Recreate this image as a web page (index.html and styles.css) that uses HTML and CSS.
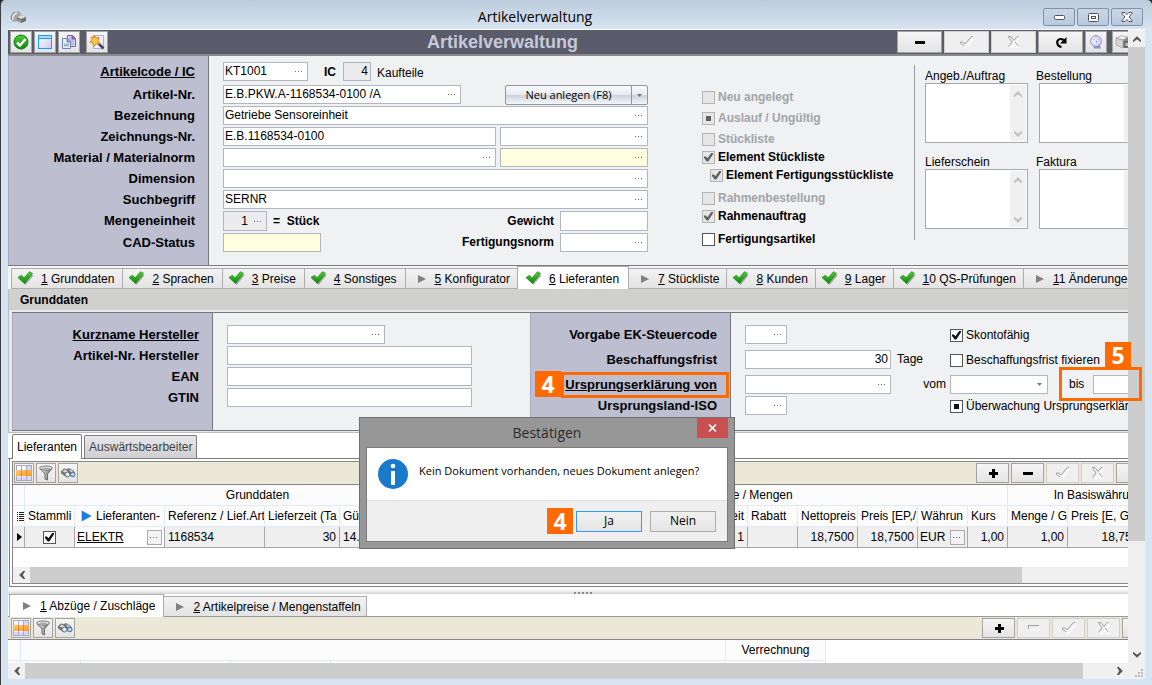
FILE: index.html
```html
<!DOCTYPE html>
<html lang="de">
<head>
<meta charset="utf-8">
<title>Artikelverwaltung</title>
<link rel="stylesheet" href="styles.css">
</head>
<body>
<svg class="sprite" aria-hidden="true">
  <defs>
    <linearGradient id="g-green" x1="0" y1="0" x2="0" y2="1"><stop offset="0" stop-color="#4fd032"/><stop offset="1" stop-color="#0f860e"/></linearGradient>
    <linearGradient id="g-lens" x1="0" y1="0" x2="1" y2="1"><stop offset="0" stop-color="#ffffff"/><stop offset="1" stop-color="#c9c9f2"/></linearGradient>
    <linearGradient id="g-orange" x1="0" y1="0" x2="1" y2="1"><stop offset="0" stop-color="#ffc873"/><stop offset="1" stop-color="#f9982a"/></linearGradient>
    <linearGradient id="g-steel" x1="0" y1="0" x2="1" y2="0"><stop offset="0" stop-color="#f4f4f4"/><stop offset="1" stop-color="#6d6d6d"/></linearGradient>
  </defs>
  <symbol id="dots" viewBox="0 0 9 3"><path d="M0 1h1v1H0zM3 1h1v1H3zM6 1h1v1H6z" fill="#6c6c6c"/></symbol>
  <symbol id="tick" viewBox="0 0 16 14"><path d="M2 8 5 6l2.500 3L13 3l3 1.500L8 14z" fill="#8a8a8a" opacity=".7"/><path d="M.500 6.500 4 4.300 6.500 7 12 .700 15 2.500 7 12.500z" fill="url(#g-green)" stroke="#128512" stroke-width=".7"/></symbol>
  <symbol id="play" viewBox="0 0 8 8"><path d="M0 0 8 4 0 8z" fill="#808080"/></symbol>
  <symbol id="ok" viewBox="0 0 16 16"><circle cx="8" cy="8" r="7" fill="url(#g-green)" stroke="#0d7a0d"/><path d="M4 8.500 7 11.500 12.500 5" fill="none" stroke="#fff" stroke-width="2.500"/></symbol>
  <symbol id="win" viewBox="0 0 16 16"><rect x="1.500" y="1.500" width="13" height="13" fill="url(#g-lens)" stroke="#1c9bff"/><path d="M2 2h12v2H2z" fill="#a8dcff"/><path d="M1 4.500h14" stroke="#1c9bff"/></symbol>
  <symbol id="copy" viewBox="0 0 16 16"><path d="M6.500 1.500h5l3 3v8h-8z" fill="#ded8f4" stroke="#7460a4"/><path d="M11 1.500v3.500h3.500" fill="#8a62b8" stroke="#7c4fae"/><path d="M8 4h2M8 6h5M8 8h5M8 10h5" stroke="#a79bd0"/><path d="M1.500 4.500h5l3 3v7h-8z" fill="#e8eefa" stroke="#6d84b0"/><path d="M6 4.500v3.500h3.500" fill="#8fa3cb" stroke="#6d84b0"/><path d="M3 9.500h5v3H3z" fill="#a3b3d4"/></symbol>
  <symbol id="wand" viewBox="0 0 16 16"><path d="M4.500 1.500h10v13h-10z" fill="#f0efff" stroke="#9fb0e6"/><path d="M9 9l5.500 5.500" stroke="#3e4660" stroke-width="2.500"/><path d="M5.500 1.500 7 4l3-.500L9 6.500l2 3.500-3.500-.500L5 12.500 4 9 .800 8l2.400-2L2 3l3 .500z" fill="#ffc94c" stroke="#e5811f"/></symbol>
  <symbol id="gridicon" viewBox="0 0 18 16"><path d="M1 0h16v16H1z" fill="#fafaff"/><path d="M12 0h5v16h-5zM1 12h16v4H1z" fill="#d6d6f6"/><path d="M1 5h16v6H1z" fill="url(#g-orange)"/><path d="M1.500 0v5M1.500 11v5M6.500 0v5M6.500 11v5M11.500 0v5M11.500 11v5M16.500 0v5M16.500 11v5M1 .500h16M1 15.500h16" stroke="#a9a9c4"/><path d="M6.500 5v6M11.500 5v6" stroke="#e08c2c"/></symbol>
  <symbol id="funnel" viewBox="0 0 16 16"><path d="M2.500 4 7 9v5l2.500 1V9l4-5z" fill="url(#g-steel)" stroke="#6c6c6c"/><ellipse cx="8" cy="3" rx="6.500" ry="2" fill="#e9e9e9" stroke="#767676"/><ellipse cx="8" cy="3.500" rx="4" ry="1" fill="#aaa"/></symbol>
  <symbol id="binoc" viewBox="0 0 16 16"><path d="M1 6 4 3.500l3 .500 2-1 5 3 1 3-2 2.500-3-1-3 1.500-3-1.500-3-2z" fill="#777"/><path d="M2.500 6 5 4.500l3 2-2 2zM9 4.500l2 .500 2.500 2-2 1z" fill="#d8d8d8"/><circle cx="7.500" cy="9.500" r="2.500" fill="#dceeff" stroke="#55697c"/><circle cx="12.800" cy="9.500" r="2.300" fill="#a9d6fb" stroke="#55697c"/></symbol>
  <symbol id="minus" viewBox="0 0 12 12"><path d="M1 5h10v3H1z" fill="#000"/></symbol>
  <symbol id="plus" viewBox="0 0 12 12"><path d="M2 5h9v3H2zM5 2h3v9H5z" fill="#000"/></symbol>
  <symbol id="minus-off" viewBox="0 0 12 6"><path d="M0 0h11v1H1v3H0z" fill="#a0a0a0"/><path d="M12 1v4H1V4h10V1z" fill="#fff"/></symbol>
  <symbol id="check-off" viewBox="0 0 14 12"><path d="M13.500 2 6 11.500 2 8.500" fill="none" stroke="#fff" stroke-width="1.500"/><path d="M4.500 10 .500 7.500V6h2.500l2 2L11.500.500H13" fill="none" stroke="#a0a0a0"/></symbol>
  <symbol id="cross-off" viewBox="0 0 12 12"><path d="M11.500 1.500 8 6l3.500 5.500H9L6.500 8 4 11.500H2" fill="none" stroke="#fff" stroke-width="1.500"/><path d="M4 6 .500 1V.500H3L6 4.500 9 .500h1.500M4 6 .500 10.500M7 6l3.500 4.500" fill="none" stroke="#a0a0a0"/></symbol>
  <symbol id="redo" viewBox="0 0 12 12"><path d="M6.500 11C1 10 1 3 5.500 3 8 3 9 4 9.500 5.500" fill="none" stroke="#000" stroke-width="2.200"/><path d="M11.500 1v6.500H5z" fill="#000"/></symbol>
  <symbol id="clock" viewBox="0 0 14 15"><path d="M4 11.500 5 14.500h7L11 10z" fill="#8f8fc8"/><circle cx="7" cy="6.500" r="5.800" fill="url(#g-lens)" stroke="#8383c4"/><path d="M7 7h1M4 4l1 1M10 4l-1 1M7 2v1" stroke="#5a5aa8"/></symbol>
  <symbol id="cube" viewBox="0 0 16 14"><path d="M1 3 6 .800l7 1.200L8 5z" fill="#f2f2f2" stroke="#999" stroke-width=".7"/><path d="M1 3l7 2v8l-7-3z" fill="#d4d4d4" stroke="#999" stroke-width=".7"/><path d="M8 5l5-3v8l-5 3z" fill="#8a8a8a"/><path d="M9 6h7v7H9z" fill="#6a6a6a"/><path d="M10.500 8H16v3h-5.500z" fill="#c4c4c4"/></symbol>
  <symbol id="parts" viewBox="0 0 17 14"><path d="M1 7c0-2 2-5 5-5 2-2 5 0 5 3l-2 5-5 2-2-1z" fill="#a4a6a8"/><path d="M3 10C2 6 4 4 7 3" fill="none" stroke="#eee" stroke-width="1.500"/><path d="M2 10c-2-3 0-6 3-8" fill="none" stroke="#808284"/><path d="M7 7 12 5l4 2v4l-5 2-4-2z" fill="#6d6f70"/><path d="M7 7l4 2 5-2-4-2z" fill="#dcdcda"/><path d="M8 9l3 1.500V13L8 11.500z" fill="#a5a5a3"/></symbol>
  <symbol id="up" viewBox="0 0 8 6"><path d="M0 4.500 4 .500l4 4v1.500L4 3 0 6z" fill="currentColor" stroke="currentColor" stroke-width=".5"/></symbol>
  <symbol id="down" viewBox="0 0 8 6"><path d="M0 0l4 3 4-3v1.500l-4 4-4-4z" fill="currentColor" stroke="currentColor" stroke-width=".5"/></symbol>
  <symbol id="left" viewBox="0 0 6 8"><path d="M4.500 0 .500 4l4 4H6L3.500 4 6 0z" fill="currentColor" stroke="currentColor" stroke-width=".5"/></symbol>
  <symbol id="right" viewBox="0 0 6 8"><path d="M0 0h1.500l4 4-4 4H0l2.500-4z" fill="currentColor" stroke="currentColor" stroke-width=".5"/></symbol>
  <symbol id="caret" viewBox="0 0 5 3"><path d="M0 0h5L2.500 3z" fill="#777"/></symbol>
</svg>

<div class="window">
  <header class="titlebar">
    <svg class="app-icon"><use href="#parts"/></svg>
    <h1 class="window-title">Artikelverwaltung</h1>
    <div class="window-buttons">
      <button class="win-btn" aria-label="Minimieren"><svg width="11" height="5" viewBox="0 0 11 5"><rect x=".5" y=".5" width="10" height="4" rx="1" fill="#fff" stroke="#4a5266"/></svg></button>
      <button class="win-btn" aria-label="Maximieren"><svg width="11" height="9" viewBox="0 0 11 9"><rect x=".5" y=".5" width="10" height="8" rx="1" fill="#fff" stroke="#4a5266"/><rect x="3.500" y="3.500" width="4" height="2" fill="#fff" stroke="#4a5266"/></svg></button>
      <button class="win-btn" aria-label="Schließen"><svg width="12" height="10" viewBox="0 0 12 10"><path d="M1 .500h3L6 2.500 8 .500h3v1L8 5l3 3.500v1H8l-2-2-2 2H1v-1L4 5 1 1.500z" fill="#fff" stroke="#4a5266"/></svg></button>
    </div>
  </header>

  <div class="workarea">
    <main class="viewport">
      <div class="toolbar">
        <div class="tools-left">
          <button class="tool" aria-label="OK"><svg class="i16"><use href="#ok"/></svg></button>
          <button class="tool" aria-label="Fenster"><svg class="i16"><use href="#win"/></svg></button>
          <button class="tool" aria-label="Kopieren"><svg class="i16"><use href="#copy"/></svg></button>
          <button class="tool apart" aria-label="Assistent"><svg class="i16"><use href="#wand"/></svg></button>
        </div>
        <h2 class="form-title">Artikelverwaltung</h2>
        <div class="tools-right">
          <button class="tool wide" aria-label="Löschen"><svg class="i12"><use href="#minus"/></svg></button>
          <button class="tool wide" disabled aria-label="Übernehmen"><svg class="i14"><use href="#check-off"/></svg></button>
          <button class="tool wide" disabled aria-label="Verwerfen"><svg class="i12"><use href="#cross-off"/></svg></button>
          <button class="tool wide" aria-label="Aktualisieren"><svg class="i12"><use href="#redo"/></svg></button>
          <button class="tool" aria-label="Verlauf"><svg class="i14"><use href="#clock"/></svg></button>
          <button class="tool last" aria-label="Teile"><svg class="i16"><use href="#cube"/></svg></button>
        </div>
      </div>

      <section class="head-form">
        <div class="captions">
          <label class="lead link" for="code">Artikelcode / IC</label>
          <label for="nr">Artikel-Nr.</label>
          <label for="bez">Bezeichnung</label>
          <label for="zng">Zeichnungs-Nr.</label>
          <label for="mat">Material / Materialnorm</label>
          <label for="dim">Dimension</label>
          <label for="such">Suchbegriff</label>
          <label class="tall" for="me">Mengeneinheit</label>
          <label for="cad">CAD-Status</label>
        </div>
        <div class="pane">
          <div class="rows">
            <div class="row lead">
              <span class="field w85"><input id="code" value="KT1001"><button aria-label="Auswahl"><svg><use href="#dots"/></svg></button></span>
              <label class="strong ic" for="ic">IC</label>
              <span class="field off w28"><input id="ic" class="num" value="4"></span>
              <span class="note">Kaufteile</span>
            </div>
            <div class="row spread">
              <span class="field w238"><input id="nr" value="E.B.PKW.A-1168534-0100 /A"><button aria-label="Auswahl"><svg><use href="#dots"/></svg></button></span>
              <span class="split"><button class="split-main">Neu anlegen (F8)</button><button class="split-more" aria-label="Mehr"><svg class="caret"><use href="#caret"/></svg></button></span>
            </div>
            <div class="row"><span class="field grow"><input id="bez" value="Getriebe Sensoreinheit"><button aria-label="Auswahl"><svg><use href="#dots"/></svg></button></span></div>
            <div class="row">
              <span class="field grow"><input id="zng" value="E.B.1168534-0100"></span>
              <span class="field w148"><input aria-label="Zeichnungsindex"><button aria-label="Auswahl"><svg><use href="#dots"/></svg></button></span>
            </div>
            <div class="row">
              <span class="field grow"><input id="mat"><button aria-label="Auswahl"><svg><use href="#dots"/></svg></button></span>
              <span class="field yellow w148"><input aria-label="Materialnorm"><button aria-label="Auswahl"><svg><use href="#dots"/></svg></button></span>
            </div>
            <div class="row"><span class="field grow"><input id="dim"><button aria-label="Auswahl"><svg><use href="#dots"/></svg></button></span></div>
            <div class="row"><span class="field grow"><input id="such" value="SERNR"><button aria-label="Auswahl"><svg><use href="#dots"/></svg></button></span></div>
            <div class="row tall">
              <span class="field off w44"><input id="me" class="num" value="1"><button aria-label="Auswahl"><svg><use href="#dots"/></svg></button></span>
              <span class="strong unit-name">=&nbsp; Stück</span>
              <label class="strong push" for="gew">Gewicht</label>
              <span class="field w88"><input id="gew"></span>
            </div>
            <div class="row">
              <span class="field yellow w98"><input id="cad"></span>
              <label class="strong push" for="fn">Fertigungsnorm</label>
              <span class="field w88"><input id="fn"><button aria-label="Auswahl"><svg><use href="#dots"/></svg></button></span>
            </div>
          </div>
          <div class="flags">
            <label class="check muted gap-s"><input type="checkbox" disabled>Neu angelegt</label>
            <label class="check muted gap-s"><input type="checkbox" class="mixed" disabled>Auslauf / Ungültig</label>
            <label class="check muted"><input type="checkbox" disabled>Stückliste</label>
            <label class="check"><input type="checkbox" checked disabled>Element Stückliste</label>
            <label class="check indent gap-m"><input type="checkbox" checked disabled>Element Fertigungsstückliste</label>
            <label class="check muted"><input type="checkbox" disabled>Rahmenbestellung</label>
            <label class="check gap-m"><input type="checkbox" checked disabled>Rahmenauftrag</label>
            <label class="check"><input type="checkbox">Fertigungsartikel</label>
          </div>
          <div class="memos">
            <div class="memo"><label for="m1">Angeb./Auftrag</label><div class="memo-box"><textarea id="m1"></textarea><span class="memo-bar"><svg class="arr-v"><use href="#up"/></svg><svg class="arr-v"><use href="#down"/></svg></span></div></div>
            <div class="memo second"><label for="m2">Bestellung</label><div class="memo-box"><textarea id="m2"></textarea><span class="memo-bar"><svg class="arr-v"><use href="#up"/></svg><svg class="arr-v"><use href="#down"/></svg></span></div></div>
            <div class="memo"><label for="m3">Lieferschein</label><div class="memo-box"><textarea id="m3"></textarea><span class="memo-bar"><svg class="arr-v"><use href="#up"/></svg><svg class="arr-v"><use href="#down"/></svg></span></div></div>
            <div class="memo second"><label for="m4">Faktura</label><div class="memo-box"><textarea id="m4"></textarea><span class="memo-bar"><svg class="arr-v"><use href="#up"/></svg><svg class="arr-v"><use href="#down"/></svg></span></div></div>
          </div>
        </div>
      </section>

      <nav class="tabs">
        <button class="tab"><svg class="tick"><use href="#tick"/></svg><span><u>1</u> Grunddaten</span></button>
        <button class="tab"><svg class="tick"><use href="#tick"/></svg><span><u>2</u> Sprachen</span></button>
        <button class="tab"><svg class="tick"><use href="#tick"/></svg><span><u>3</u> Preise</span></button>
        <button class="tab"><svg class="tick"><use href="#tick"/></svg><span><u>4</u> Sonstiges</span></button>
        <button class="tab"><svg class="play"><use href="#play"/></svg><span><u>5</u> Konfigurator</span></button>
        <button class="tab active"><svg class="tick"><use href="#tick"/></svg><span><u>6</u> Lieferanten</span></button>
        <button class="tab"><svg class="play"><use href="#play"/></svg><span><u>7</u> Stückliste</span></button>
        <button class="tab"><svg class="tick"><use href="#tick"/></svg><span><u>8</u> Kunden</span></button>
        <button class="tab"><svg class="tick"><use href="#tick"/></svg><span><u>9</u> Lager</span></button>
        <button class="tab"><svg class="tick"><use href="#tick"/></svg><span><u>1</u>0 QS-Prüfungen</span></button>
        <button class="tab"><svg class="play"><use href="#play"/></svg><span><u>1</u>1 Änderungen</span></button>
      </nav>

      <section class="supplier">
        <h3 class="group-title">Grunddaten</h3>
        <div class="supplier-form">
          <div class="captions">
            <label class="link" for="kh">Kurzname Hersteller</label>
            <label for="ah">Artikel-Nr. Hersteller</label>
            <label for="ean">EAN</label>
            <label for="gtin">GTIN</label>
          </div>
          <div class="pane maker">
            <div class="rows">
              <div class="row"><span class="field w158"><input id="kh"><button aria-label="Auswahl"><svg><use href="#dots"/></svg></button></span></div>
              <div class="row"><span class="field grow"><input id="ah"></span></div>
              <div class="row"><span class="field grow"><input id="ean"></span></div>
              <div class="row"><span class="field grow"><input id="gtin"></span></div>
            </div>
          </div>
          <div class="captions">
            <label class="gap-m" for="ek">Vorgabe EK-Steuercode</label>
            <label class="gap-m" for="bf">Beschaffungsfrist</label>
            <label class="link" for="ue">Ursprungserklärung von</label>
            <label for="iso">Ursprungsland-ISO</label>
          </div>
          <div class="pane">
            <div class="rows origin">
              <div class="row gap-m"><span class="cell"><span class="field w42"><input id="ek"><button aria-label="Auswahl"><svg><use href="#dots"/></svg></button></span></span><span class="unit"></span><label class="check plain"><input type="checkbox" checked>Skontofähig</label></div>
              <div class="row gap-m"><span class="cell"><span class="field grow"><input id="bf" class="num" value="30"></span></span><span class="unit">Tage</span><label class="check plain"><input type="checkbox">Beschaffungsfrist fixieren</label></div>
              <div class="row"><span class="cell"><span class="field grow"><input id="ue"><button aria-label="Auswahl"><svg><use href="#dots"/></svg></button></span></span><label class="unit end" for="vom">vom</label><span class="field w98"><input id="vom"><button aria-label="Kalender"><svg class="caret"><use href="#caret"/></svg></button></span><label class="bis" for="bis">bis</label><span class="field w98"><input id="bis"></span></div>
              <div class="row"><span class="cell"><span class="field w42"><input id="iso"><button aria-label="Auswahl"><svg><use href="#dots"/></svg></button></span></span><span class="unit"></span><label class="check plain"><input type="checkbox" class="mixed">Überwachung Ursprungserklärung</label></div>
            </div>
          </div>
        </div>
      </section>

      <nav class="subtabs">
        <button class="subtab active">Lieferanten</button>
        <button class="subtab">Auswärtsbearbeiter</button>
      </nav>

      <section class="grid-panel">
        <div class="grid-frame">
          <div class="gridbar">
            <button class="tool small" aria-label="Tabelle"><svg class="i18"><use href="#gridicon"/></svg></button>
            <button class="tool small" aria-label="Filter"><svg class="i16"><use href="#funnel"/></svg></button>
            <button class="tool small" aria-label="Suchen"><svg class="i16"><use href="#binoc"/></svg></button>
            <div class="gridbar-right upper">
              <button class="tool mid" aria-label="Neu"><svg class="i12"><use href="#plus"/></svg></button>
              <button class="tool mid" aria-label="Löschen"><svg class="i12"><use href="#minus"/></svg></button>
              <button class="tool mid" disabled aria-label="Übernehmen"><svg class="i14"><use href="#check-off"/></svg></button>
              <button class="tool mid" disabled aria-label="Verwerfen"><svg class="i12"><use href="#cross-off"/></svg></button>
              <button class="tool mid" aria-label="Aktualisieren"></button>
            </div>
          </div>
          <div class="table-clip">
            <table class="grid">
              <colgroup><col class="c12"><col class="c50"><col class="c90"><col class="c100"><col class="c75"><col class="c151"><col class="c207"><col class="c50"><col class="c50"><col class="c60"><col class="c60"><col class="c50"><col class="c40"><col class="c60"><col class="c81"><col class="c40"></colgroup>
              <thead>
                <tr><th></th><th class="mid-text" colspan="5">Grunddaten</th><th class="mid-text" colspan="7">Preise / Mengen</th><th class="mid-text" colspan="3">In Basiswährung</th></tr>
                <tr><th class="mark"><svg width="7" height="9" viewBox="0 0 7 9"><path d="M0 .500h1M2 .500h5M0 2.500h1M2 2.500h5M0 4.500h1M2 4.500h5M0 6.500h1M2 6.500h5M0 8.500h1M2 8.500h5" stroke="#222"/></svg></th><th>Stammli</th><th><svg class="sort" viewBox="0 0 10 10"><path d="M1 0 10 5 1 10z" fill="#1d7fe0" stroke="#1763b8" stroke-width=".5"/></svg>Lieferanten-</th><th>Referenz / Lief.Art</th><th>Lieferzeit (Ta</th><th>Gültig</th><th></th><th class="num">Einheit</th><th>Rabatt</th><th>Nettopreis</th><th>Preis [EP,/</th><th>Währun</th><th>Kurs</th><th>Menge / G</th><th>Preis [E, G</th><th></th></tr>
              </thead>
              <tbody>
                <tr><td class="mark"><svg width="5" height="8" viewBox="0 0 5 8"><path d="M0 0 5 4 0 8z" fill="#000"/></svg></td><td class="mid-text"><input type="checkbox" checked aria-label="Stammlieferant"></td><td class="open"><span class="cell-pick"><a href="#">ELEKTR</a><button aria-label="Auswahl"><svg><use href="#dots"/></svg></button></span></td><td>1168534</td><td class="num">30</td><td>14.</td><td></td><td class="num">1</td><td></td><td class="num">18,7500</td><td class="num">18,7500</td><td class="tight"><span class="cell-pick">EUR<button aria-label="Auswahl"><svg><use href="#dots"/></svg></button></span></td><td class="num">1,00</td><td class="num">1,00</td><td class="num">18,7500</td><td></td></tr>
              </tbody>
            </table>
          </div>
          <div class="hbar inner"><button aria-label="Nach links"><svg class="arr-h"><use href="#left"/></svg></button><span class="thumb"></span></div>
        </div>
      </section>

      <div class="splitter"><span></span><span></span><span></span><span></span><span></span></div>

      <nav class="lowtabs">
        <button class="tab active"><svg class="play"><use href="#play"/></svg><span><u>1</u> Abzüge / Zuschläge</span></button>
        <button class="tab"><svg class="play"><use href="#play"/></svg><span><u>2</u> Artikelpreise / Mengenstaffeln</span></button>
      </nav>
      <div class="gridbar low">
        <button class="tool small" aria-label="Tabelle"><svg class="i18"><use href="#gridicon"/></svg></button>
        <button class="tool small" aria-label="Filter"><svg class="i16"><use href="#funnel"/></svg></button>
        <button class="tool small" aria-label="Suchen"><svg class="i16"><use href="#binoc"/></svg></button>
        <div class="gridbar-right">
          <button class="tool mid" aria-label="Neu"><svg class="i12"><use href="#plus"/></svg></button>
          <button class="tool mid" disabled aria-label="Löschen"><svg width="12" height="6"><use href="#minus-off"/></svg></button>
          <button class="tool mid" disabled aria-label="Übernehmen"><svg class="i14"><use href="#check-off"/></svg></button>
          <button class="tool mid" disabled aria-label="Verwerfen"><svg class="i12"><use href="#cross-off"/></svg></button>
          <button class="tool mid" aria-label="Aktualisieren"></button>
        </div>
      </div>
      <div class="low-table">
        <table class="grid low-grid">
          <colgroup><col class="c12"><col class="c60"><col class="c150"><col class="c100"><col class="c395"><col class="c100"></colgroup>
          <thead>
            <tr><th></th><th colspan="4"></th><th class="mid-text">Verrechnung</th></tr>
            <tr><th></th><th></th><th></th><th></th><th></th><th></th></tr>
          </thead>
        </table>
      </div>
    </main>
    <div class="vbar"><button aria-label="Nach oben"><svg class="arr-v"><use href="#up"/></svg></button><span class="thumb"></span><button aria-label="Nach unten"><svg class="arr-v"><use href="#down"/></svg></button></div>
    <div class="hbar outer"><button aria-label="Nach links"><svg class="arr-h"><use href="#left"/></svg></button><span class="thumb"></span><button aria-label="Nach rechts"><svg class="arr-h"><use href="#right"/></svg></button></div>
    <div class="grip"><svg width="8" height="8" viewBox="0 0 8 8"><path d="M6 0h2v2H6zM3 3h2v2H3zM6 3h2v2H6zM0 6h2v2H0zM3 6h2v2H3zM6 6h2v2H6z" fill="#b9b9b9"/></svg></div>
  </div>

  <div class="frame frame-origin"></div>
  <span class="badge badge-origin">4</span>
  <div class="frame frame-until"></div>
  <span class="badge badge-until">5</span>

  <div class="dialog" role="dialog" aria-labelledby="dlg-title">
    <div class="dialog-head"><h2 id="dlg-title">Bestätigen</h2><button class="dialog-close" aria-label="Schließen"><svg width="9" height="8" viewBox="0 0 9 8"><path d="M1 .500 8 7.500M8 .500 1 7.500" stroke="#fff" stroke-width="1.600"/></svg></button></div>
    <div class="dialog-inner">
      <div class="dialog-body">
        <svg class="info" viewBox="0 0 30 30"><circle cx="15" cy="15" r="15" fill="#1979ca"/><circle cx="15" cy="7" r="2.300" fill="#fff"/><path d="M13 12h4v14h-4z" fill="#fff"/></svg>
        <p>Kein Dokument vorhanden, neues Dokument anlegen?</p>
      </div>
      <div class="dialog-foot"><span class="badge">4</span><button class="dlg-btn primary">Ja</button><button class="dlg-btn">Nein</button></div>
    </div>
  </div>
</div>
</body>
</html>
```
FILE: styles.css
```css
* { box-sizing: border-box; }
body { margin: 0; background: #2b2b2b; color: #000; font: 12px/14px "Liberation Sans", Arial, sans-serif; }
h1, h2, h3, p { margin: 0; font-weight: normal; }
button, input, textarea { margin: 0; padding: 0; font: inherit; color: inherit; border-radius: 0; }
button { display: flex; align-items: center; justify-content: center; flex-shrink: 0; border: 0; background: none; }
input { min-width: 0; outline: 0; }
svg { display: block; flex-shrink: 0; }
.sprite { position: absolute; width: 0; height: 0; }
.i12 { width: 12px; height: 12px; }
.i14 { width: 14px; height: 14px; }
.i16 { width: 16px; height: 16px; }
.i18 { width: 18px; height: 16px; }
.arr-v { width: 8px; height: 6px; }
.arr-h { width: 6px; height: 8px; }
.caret { width: 5px; height: 3px; }

/* window */
.window { position: relative; display: flex; flex-direction: column; height: 100vh; padding: 0 7px 6px; border-left: 1px solid #3c3c42; border-radius: 5px 5px 0 0; background: linear-gradient(#bccbdb, #d7e4f2 29px); overflow: hidden; }
.titlebar { display: flex; align-items: center; height: 29px; padding: 5px 2px 0 2px; }
.app-icon { width: 17px; height: 14px; }
.window-title { flex: 1; text-align: center; font: 14px/20px "Open Sans", "Noto Sans", sans-serif; }
.window-buttons { display: flex; gap: 2px; }
.win-btn { width: 32px; height: 18px; border: 1px solid #8291aa; border-radius: 2px; background: linear-gradient(#c9d6e5, #b9c9dc); }
.workarea { flex: 1; min-height: 0; display: grid; grid-template: minmax(0, 1fr) 16px / minmax(0, 1fr) 17px; border-top: 1px solid #fff; background: #f0f0f0; }
.viewport { display: flex; flex-direction: column; overflow: hidden; background: #fff; }
.viewport > * { flex-shrink: 0; }

/* toolbar */
.toolbar { display: flex; align-items: center; height: 26px; padding-left: 2px; border-bottom: 2px solid #8a8a8a; background: #5a5b6b; }
.tools-left { display: flex; gap: 2px; }
.form-title { flex: 1; text-align: center; color: #c6c9d8; font: bold 18px/22px "Liberation Sans", Arial, sans-serif; }
.tools-right { display: flex; gap: 2px; width: 231px; overflow: hidden; }
.tool { width: 22px; height: 22px; border: 1px solid #a3a3a3; background: linear-gradient(#f5f5f5, #e4e4e4); }
.tool.wide { width: 45px; }
.tool:disabled { border-color: #cfcfcf; background: #efefef; }
.tool.apart { margin-left: 4px; }
.tool.last { margin-left: 3px; }
.tool.small { width: 20px; height: 20px; }
.tool.mid { width: 33px; height: 20px; }

/* forms */
.head-form { display: flex; height: 210px; border-bottom: 1px solid #7c7c80; }
.captions { display: flex; flex-direction: column; gap: 2px; width: 200px; flex-shrink: 0; padding: 6px 13px 0 0; border: 1px solid #a9aabf; border-width: 0 0 0 1px; background: #bdbed0; font: bold 13px/19px "Liberation Sans", Arial, sans-serif; text-align: right; }
.captions .tall { line-height: 20px; }
.link { text-decoration: underline; }
.lead { margin-bottom: 2px; }
.pane { display: flex; flex: 1; min-width: 0; border-left: 1px solid #77777c; background: #eff1f3; }
.rows { display: flex; flex-direction: column; gap: 2px; width: 439px; flex-shrink: 0; padding: 6px 0 0 14px; }
.row { display: flex; gap: 4px; height: 19px; line-height: 19px; }
.row.tall { height: 20px; line-height: 20px; }
.spread { justify-content: space-between; }
.field { display: flex; flex-shrink: 0; border: 1px solid #b1b6c0; background: #fff; }
.field input { flex: 1; width: 0; padding: 0 2px 0 1px; border: 0; background: transparent; }
.field button { width: 16px; }
.field button svg:not(.caret), .cell-pick button svg { width: 9px; height: 3px; }
.field.off { background: #ececee; }
.field.yellow { background: #ffffdf; }
.grow { flex: 1; }
.w28 { width: 28px; }
.w42 { width: 42px; }
.w44 { width: 44px; }
.w85 { width: 85px; }
.w88 { width: 88px; }
.w98 { width: 98px; }
.w148 { width: 148px; }
.w158 { width: 158px; }
.w238 { width: 238px; }
.num { text-align: right; }
.strong { font-weight: bold; }
.ic { padding: 1px 3px 0 12px; }
.note { padding: 2px 0 0 2px; }
.unit-name { padding-left: 2px; }
.push { margin-left: auto; padding-right: 2px; }
.split { display: flex; height: 20px; border: 1px solid #8f97a5; border-radius: 2px; background: linear-gradient(#fafbfd, #e6ebf2 48%, #cbd3de 52%, #f4f7fa); }
.split-main { width: 125px; font: 11px/16px "Open Sans", "Noto Sans", sans-serif; }
.split-more { width: 16px; border-left: 1px solid #8f97a5; }
.flags { display: flex; flex-direction: column; align-items: flex-start; flex-shrink: 0; width: 212px; margin-left: 54px; padding-top: 32px; }
.check { display: flex; align-items: center; gap: 3px; height: 18px; font-weight: bold; white-space: nowrap; }
.check.plain { font-weight: normal; height: 20px; }
.muted { color: #a3a4a8; }
.indent { margin-left: 8px; }
.gap-s { margin-bottom: 3px; }
.gap-m { margin-bottom: 4px; }
.flags .gap-m { margin-bottom: 5px; }
input[type="checkbox"] { appearance: none; display: grid; place-items: center; flex-shrink: 0; width: 13px; height: 13px; border: 1px solid #555; background: #fff; color: #111; }
input[type="checkbox"]:disabled { border-color: #b4b4b4; background: #e6e6e6; color: #606060; }
input[type="checkbox"]:checked::before { content: ""; width: 9px; height: 9px; background: currentColor; clip-path: polygon(0 45%, 22% 45%, 38% 65%, 80% 5%, 100% 5%, 100% 20%, 48% 100%, 30% 100%, 0 62%); }
.mixed::before { content: ""; width: 5px; height: 5px; background: currentColor; }
.memos { display: grid; grid-template-columns: 103px 106px; grid-auto-rows: 74px; gap: 12px 8px; align-content: start; flex-shrink: 0; height: 175px; margin-top: 9px; padding: 4px 0 0 10px; border-left: 1px solid #9a9a9f; }
.memo { display: flex; flex-direction: column; }
.memo.second .memo-box { margin-left: 3px; }
.memo-box { display: flex; flex: 1; border: 1px solid #a5a8ae; background: #fff; padding: 1px; }
.memo-box textarea { flex: 1; min-width: 0; border: 0; resize: none; outline: 0; }
.memo-bar { display: flex; flex-direction: column; justify-content: space-between; align-items: center; width: 16px; padding: 6px 0 4px; background: #f0f0f0; color: #bdbdbd; }

/* tabs */
.tabs { display: flex; align-items: flex-end; height: 23px; padding-left: 3px; background: #f6f6f6; }
.tab { height: 21px; gap: 7px; padding: 0 7px 0 5px; border: 1px solid #adadad; border-width: 1px 0 1px 1px; background: linear-gradient(#f3f3f3, #e3e3e3); white-space: nowrap; }
.tabs .active { height: 23px; padding: 1px 9px 0 7px; border-right-width: 1px; border-bottom: 0; background: #fff; }
.tabs .active + .tab { border-left: 0; }
.tabs .tab:nth-child(-n + 4) { padding-right: 8px; }
.tab .tick { width: 17px; height: 14px; margin-bottom: 2px; }
.tab .play { width: 8px; height: 8px; margin: 0 2px 0 7px; }
.supplier { padding: 0 0 1px 3px; border: 1px solid #bdbdbd; border-width: 0 0 1px 1px; background: #e9e9e9; }
.group-title { margin-left: -3px; padding: 4px 0 3px 11px; background: #d0d0cf; font-size: 12px; font-weight: bold; }
.supplier-form { display: flex; height: 119px; margin-top: 2px; border: 1px solid #77777c; border-width: 1px 0; }
.supplier-form .captions, .supplier-form .rows { padding-top: 12px; }
.pane.maker { flex: 0 0 318px; }
.maker .rows { width: 259px; }
.origin { white-space: nowrap; }
.cell { display: flex; width: 146px; flex-shrink: 0; }
.row > .unit { width: 51px; flex-shrink: 0; padding-left: 2px; }
.unit.end { text-align: right; }
.bis { padding: 0 5px 0 17px; }

/* supplier list */
.subtabs { display: flex; align-items: flex-end; gap: 2px; height: 26px; padding-left: 4px; border-bottom: 1px solid #7d7d80; }
.subtab { height: 23px; padding: 0 4px; border: 1px solid #7d7d80; border-bottom: 0; border-radius: 2px 2px 0 0; background: linear-gradient(#e8e8ea, #cfcfd1); color: #444; }
.subtab.active { height: 25px; margin-bottom: -1px; background: #fff; color: #000; }
.grid-panel { margin-left: 1px; padding: 2px 0 2px 2px; border: 1px solid #7d7d80; border-width: 0 0 1px 1px; }
.grid-frame { border: 1px solid #85858c; border-right: 0; }
.gridbar { display: flex; align-items: center; gap: 2px; height: 23px; padding-left: 1px; border-bottom: 1px solid #85858c; background: #ebe8d7; overflow: hidden; }
.gridbar-right { display: flex; gap: 2px; width: 146px; margin-left: auto; overflow: hidden; }
.gridbar-right.upper { width: 152px; }
.table-clip { height: 82px; overflow: hidden; background: #fff; }
.grid { width: 1176px; table-layout: fixed; border-spacing: 0; }
.grid th, .grid td { height: 21px; padding: 0 3px; border: 1px solid #dfe9f8; border-width: 0 1px 1px 0; background: #fcfcfc; font-weight: normal; text-align: left; white-space: nowrap; overflow: hidden; }
.grid td { border-color: #a7a7aa; background: #efefef; }
.grid .mid-text { text-align: center; }
.grid .num { text-align: right; }
.grid .mark { padding: 0 0 0 4px; }
.grid .open { background: #fff; }
.grid .tight, .grid .open { padding: 0 2px; }
.grid a { color: inherit; }
.grid input { margin: 0 auto; }
.sort { display: inline-block; width: 10px; height: 10px; margin: 0 5px 0 3px; vertical-align: -1px; }
.cell-pick { display: flex; align-items: center; justify-content: space-between; }
.cell-pick button { width: 15px; height: 15px; border: 1px solid #aaa; background: #f3f3f3; }
.c12 { width: 12px; }
.c40 { width: 40px; }
.c50 { width: 50px; }
.c60 { width: 60px; }
.c75 { width: 75px; }
.c81 { width: 81px; }
.c90 { width: 90px; }
.c100 { width: 100px; }
.c150 { width: 150px; }
.c151 { width: 151px; }
.c207 { width: 207px; }
.c395 { width: 395px; }

/* scroll bars */
.hbar { display: flex; background: #f0f0f0; color: #505050; }
.hbar button { width: 17px; }
.thumb { background: #cdcdcd; }
.hbar.inner { height: 16px; }
.hbar.inner .thumb { width: 89%; }
.hbar.outer button:last-child { margin-left: auto; }
.hbar.outer .thumb { flex: 0 1 1058px; }
.vbar { display: flex; flex-direction: column; color: #505050; }
.vbar button { height: 17px; width: 17px; }
.vbar .thumb { flex: 0 1 494px; }
.vbar button:last-child { margin-top: auto; }
.grip { display: flex; align-items: flex-end; justify-content: flex-end; padding: 2px; }

/* lower panel */
.splitter { display: flex; align-items: flex-end; justify-content: center; gap: 2px; height: 7px; padding-left: 30px; background: linear-gradient(#fff 30%, #d2d4d8); }
.splitter span { width: 2px; height: 2px; background: #8a8a8a; }
.lowtabs { display: flex; align-items: flex-end; height: 23px; padding-left: 1px; border-bottom: 1px solid #9a9a9a; }
.lowtabs .tab { height: 20px; padding: 0 5px; border-width: 1px 1px 0 0; }
.lowtabs .active { height: 23px; margin-bottom: -1px; padding: 0 8px 0 6px; border-left-width: 1px; background: #fff; }
.low { padding-left: 3px; }
.low-table { height: 23px; margin-left: 1px; overflow: hidden; }
.low-grid { width: 817px; }

/* markers */
.badge { display: grid; place-items: center; width: 26px; height: 26px; background: #ff6a00; color: #fff; font: bold 23px/26px "Open Sans", "Noto Sans", sans-serif; }
.badge-origin, .badge-until, .frame { position: absolute; }
.badge-origin { left: 534px; top: 371px; }
.badge-until { left: 1104px; top: 342px; }
.frame { border: 3px solid #ff6a00; }
.frame-origin { left: 560px; top: 372px; width: 168px; height: 26px; }
.frame-until { left: 1058px; top: 367px; width: 83px; height: 34px; }

/* dialog */
.dialog { position: absolute; left: 358px; top: 417px; width: 376px; padding: 0 6px 6px; border: 1px solid #6f6f6f; background: #979797; }
.dialog-head { position: relative; height: 29px; }
.dialog-head h2 { text-align: center; color: #2b2b2b; font: 14px/29px "Open Sans", "Noto Sans", sans-serif; }
.dialog-close { position: absolute; right: 0; top: 0; width: 31px; height: 20px; background: #c85050; }
.dialog-inner { border: 1px solid #7b7b7b; background: #fff; }
.dialog-body { display: flex; gap: 11px; height: 53px; padding: 11px 11px 0; border-bottom: 1px solid #dfdfdf; font: 11px/24px "Open Sans", "Noto Sans", sans-serif; white-space: nowrap; }
.info { width: 30px; height: 30px; }
.dialog-foot { display: flex; align-items: center; justify-content: flex-end; gap: 8px; height: 40px; padding-right: 11px; background: #efefef; }
.dialog-foot .badge { margin-right: -5px; }
.dlg-btn { width: 66px; height: 21px; border: 1px solid #acacac; background: linear-gradient(#f0f0f0, #e5e5e5); font: 12px/18px "Open Sans", "Noto Sans", sans-serif; }
.dlg-btn.primary { border-color: #3399ff; }
```
